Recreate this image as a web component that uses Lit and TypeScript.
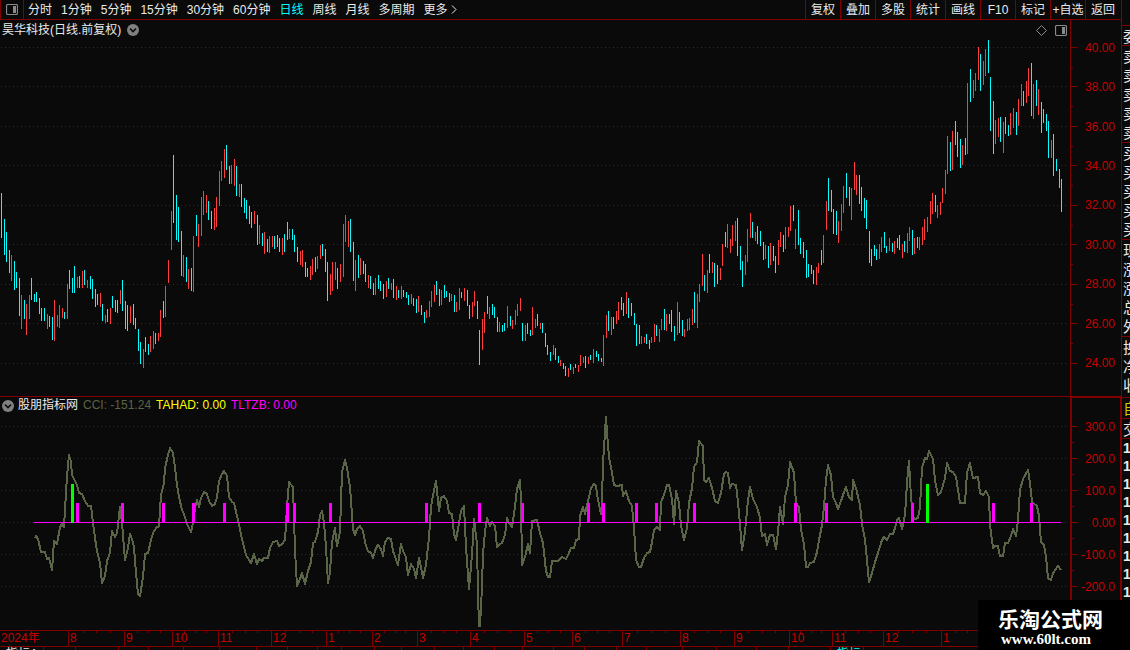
import { LitElement, html, svg, css } from "lit";
import { customElement, property } from "lit/decorators.js";
import { classMap } from "lit/directives/class-map.js";
import { styleMap } from "lit/directives/style-map.js";

/* One entry per trading day: r = up, c = down, then top and bottom of the bar. */
const DAYS = `
c193-238 c219-255 c232-262 c250-273 r255-281 c261-290 c272-288 c278-316 r295-329 c300-319 r304-335 r295-319 c278-300
c294-302 c292-302 c298-314 c308-321 c308-321 r314-329 c316-327 c317-340 r300-341 r315-327 r305-328 r308-318 c312-319
r284-319 c270-289 c278-293 c266-293 r277-288 c276-288 r271-288 c270-285 r280-288 c276-289 c279-299 c289-307 c294-305
r293-307 c304-321 r315-323 c309-322 r308-324 c296-308 c300-312 c300-313 r290-304 c280-311 c301-329 c305-331 r306-323
c304-325 c318-329 c329-351 c342-364 r349-368 c337-352 c344-355 r336-352 r331-349 c333-344 r333-341 r310-337 c301-318
r286-317 r260-283 r211-250 c155-223 c195-240 c207-242 c231-276 r255-277 c257-282 r269-289 c268-291 r236-292 c215-236
r224-247 r197-236 r191-215 r195-213 c201-220 c211-229 r208-230 r197-227 r171-206 r161-181 r149-178 c145-170 c166-184
r165-184 r159-186 c166-196 r184-197 c184-207 c198-213 c200-219 c206-224 c212-228 r211-224 c215-245 r225-244 c233-246
r232-254 c239-252 r236-253 r236-247 c236-249 c235-247 c238-252 r238-255 c234-252 c222-240 r229-239 c229-240 c235-252
c247-262 r251-265 r250-267 c262-277 c268-277 r266-280 r259-275 c257-272 r256-269 r245-259 c244-256 c249-272 c262-301
r274-295 r262-291 r262-280 c268-289 r264-282 r224-277 r215-242 r221-247 c219-252 c242-281 r260-291 c255-278 r258-275
c261-274 c264-282 r275-288 c276-289 c283-295 r278-295 c275-289 c281-291 c284-299 r281-297 c278-289 r283-290 c279-298
r286-300 c290-298 r286-299 c290-297 c292-298 c295-305 r294-304 c298-306 c299-313 r296-312 c305-315 c312-323 r310-318
r301-317 r291-307 r285-302 c281-295 c289-306 r290-305 c285-298 c291-297 c293-302 r294-301 c295-312 r302-312 r288-310
c292-298 r288-301 c290-306 c305-319 r302-317 r291-306 c301-319 c330-365 r319-350 r312-333 c296-314 r307-319 c304-315
c307-318 c317-332 r322-332 c325-332 c323-331 r306-328 c316-326 r320-329 r310-325 r304-316 r298-311 c323-341 r325-341
c323-334 c330-336 r307-335 r319-328 c314-326 r323-329 c323-333 c333-347 c345-355 c352-361 r345-355 c348-360 c356-363
r360-366 c363-369 c366-376 r368-377 c364-370 r367-374 c364-368 r365-372 r355-366 r357-363 c356-368 r357-364 c355-360
r349-363 c351-357 c354-361 c358-362 r335-366 r315-338 c311-331 r317-335 c317-329 r311-324 r302-320 c297-310 c303-316
r292-314 c298-318 c303-316 c313-325 c324-346 c325-344 r336-344 r337-343 c334-344 c340-349 r337-343 r324-342 c325-336
r329-342 r319-330 c309-330 r314-331 c314-324 c310-332 c326-341 r302-335 c312-333 c320-336 r329-337 r319-331 r318-330
r309-325 c292-323 r294-328 r284-302 r254-286 c275-291 r270-293 c254-273 r262-273 c263-287 c265-284 r268-280 r244-266
c232-247 r224-248 r239-253 r225-246 r221-241 c218-256 c246-270 c261-287 r255-275 r229-262 r213-238 c222-238 r232-241
c226-244 c231-246 c242-260 r245-259 c246-268 r243-265 c246-261 c256-273 r240-265 r232-247 c235-252 r227-249 r227-237
r206-231 c205-221 r229-249 c210-245 c238-254 c242-258 c250-278 c264-277 c265-274 c270-284 r267-285 r263-273 c250-265
r235-263 r201-230 c178-211 c190-212 c209-234 c211-235 r221-243 r204-231 r186-213 c173-198 c187-206 r188-220 r162-190
r175-195 c175-204 c187-211 c198-218 c200-229 c231-263 c249-266 c245-256 c249-260 r244-259 r237-252 c232-248 c246-253
r238-251 c243-252 r241-254 c238-248 c235-250 r244-258 c241-252 r233-253 r227-241 c230-255 r238-254 c237-248 r237-250
r227-245 r219-240 r217-232 r201-224 r193-214 c195-212 r205-218 r202-215 r188-203 r170-194 r136-174 c142-171 r131-170
c121-145 c132-157 c139-168 r145-165 c138-155 r83-154 c69-102 r80-98 r73-91 r47-80 c54-91 r61-85 r49-76 c40-73
c77-131 c101-154 r120-144 r118-137 c117-142 r122-153 c117-134 c125-136 r113-135 r108-128 c112-135 r99-126 r84-106
c91-106 r81-103 r68-96 c63-116 r84-119 c80-106 r89-115 c102-133 c109-123 c114-131 c121-158 r140-158 c134-176 c159-171
c169-188 c179-212`
  .trim()
  .split(/\s+/)
  .map((s, i) => {
    const [top, bottom] = s.slice(1).split("-").map(Number);
    return { up: s[0] === "r", x: Math.floor(1.5 + i * 2.53), top, bottom };
  });

const CCI = `35,538 36,536 38,539 41,552 45,552 47,559 49,558 52,570 54,541 57,544 60,527 62,524 64,527 67,476 69,455 71,462
72,475 77,485 79,493 82,494 85,501 88,506 91,506 93,523 96,545 98,555 100,563 102,583 105,576 107,561 110,553 112,531
115,537 117,533 120,507 122,523 125,560 128,548 130,534 132,539 134,547 136,573 138,594 140,596 143,577 145,554 148,553
151,540 153,533 156,528 159,526 161,495 164,483 165,468 168,455 170,448 173,453 175,467 177,485 179,497 182,510 184,514
187,524 191,532 193,523 195,508 197,500 199,507 201,498 204,492 207,494 209,501 212,506 215,504 217,497 219,481 222,474
224,471 227,476 229,497 232,502 234,503 237,516 239,525 242,539 246,555 249,560 251,563 254,554 257,564 259,559 262,561
264,558 268,558 270,548 273,542 277,541 279,546 282,544 285,540 287,507 289,482 293,487 295,550 297,586 300,579 302,573
305,584 308,571 311,562 313,543 315,542 318,532 320,515 322,511 324,523 326,547 328,583 330,572 332,542 335,528 337,546
340,532 342,472 345,460 347,468 350,487 353,529 355,535 357,529 360,526 363,531 366,546 368,551 371,553 373,558 376,548
378,545 381,549 383,556 385,542 388,538 391,539 393,551 398,565 401,544 403,551 406,557 408,575 411,564 414,569 416,578
419,558 421,567 423,578 426,565 429,538 431,507 433,495 436,481 439,511 441,498 444,496 447,501 449,513 452,514 454,534
456,540 459,523 461,511 464,506 466,547 469,589 472,555 474,519 477,544 478,593 479,626 480,626 482,587 483,553 485,532
487,518 490,526 492,522 495,526 497,547 500,544 502,543 505,535 507,518 509,523 512,527 515,507 517,489 520,480 521,500
522,565 525,557 528,544 530,553 532,521 537,520 540,533 543,543 546,571 548,577 550,577 552,561 558,561 562,557 566,559
568,555 571,548 574,548 576,540 579,539 580,516 583,507 585,514 589,497 591,488 594,484 596,486 598,500 601,514 602,500
603,463 606,417 607,433 609,457 612,473 614,485 617,486 622,485 623,496 626,491 629,501 632,506 634,528 636,560 639,567
641,567 644,558 647,553 650,552 652,542 654,530 657,527 660,530 661,502 664,495 667,485 669,485 672,499 674,524 676,491
679,503 681,525 684,540 687,528 689,503 692,488 694,467 697,462 699,441 703,446 704,480 706,482 709,478 712,488 715,501
718,503 721,493 724,474 726,472 728,473 730,488 732,484 736,485 738,502 740,525 742,550 745,532 748,500 750,487 753,499
757,507 760,518 762,536 765,534 767,545 770,535 773,535 776,549 778,532 780,507 783,524 785,497 788,485 790,462 792,467
794,473 796,503 799,507 801,530 804,544 806,567 808,567 810,563 814,562 817,552 819,540 822,525 824,507 826,480 828,465
831,475 833,497 836,503 838,509 841,501 844,492 846,487 849,497 852,500 853,480 856,488 860,505 862,524 865,540 867,560
869,582 872,573 875,562 878,553 882,540 884,537 887,540 890,534 893,534 895,528 897,520 899,518 902,529 905,515 907,483
909,461 911,497 913,517 915,519 918,518 920,507 922,468 925,458 927,459 929,451 933,459 935,480 938,495 941,492 945,478
947,463 950,471 953,472 956,477 958,490 960,503 965,503 967,473 970,463 973,478 978,477 980,493 983,495 986,491 989,497
990,525 993,548 995,546 998,546 1000,556 1003,556 1005,543 1008,543 1011,536 1013,529 1016,536 1018,520 1020,490 1023,479
1028,470 1030,483 1032,502 1037,506 1039,516 1041,542 1044,545 1046,557 1048,578 1051,580 1053,573 1058,566 1061,570`
  .trim()
  .split(/\s+/)
  .join(" ");

const SIGNALS = [76, 121, 162, 192, 223, 286, 293, 329, 425, 478, 521, 587, 602, 635, 655, 693, 794, 825, 911, 992, 1030];
const BUYS = [71, 926];

const PRICE_LINES = [47, 86, 126, 165, 205, 244, 284, 323, 363];
const CCI_LINES = [426, 458, 490, 522, 554, 586];

const PERIODS = ["分时", "1分钟", "5分钟", "15分钟", "30分钟", "60分钟", "日线", "周线", "月线", "多周期", "更多"];
const TOOLS = ["复权", "叠加", "多股", "统计", "画线", "F10", "标记", "+自选", "返回"];

const MONTHS: [string, number][] = [
  ["2024年", 68], ["8", 56], ["9", 48], ["10", 46], ["11", 53], ["12", 55], ["1", 46], ["2", 45], ["3", 53],
  ["4", 54], ["5", 48], ["6", 50], ["7", 58], ["8", 54], ["9", 55], ["10", 43], ["11", 51], ["12", 58], ["1", 52], ["", 128],
];

const TABS: [string, number][] = [
  ["指标A", 43], ["", 31], ["", 42], ["", 29], ["", 34], ["", 35], ["", 36], ["", 30], ["", 29], ["", 24], ["", 32],
  ["", 26], ["", 32], ["", 28], ["", 30], ["", 28], ["", 30], ["", 30], ["", 31], ["", 29], ["", 35], ["", 33],
  ["", 39], ["", 31], ["", 41], ["指标", 32], ["", 250],
];

const share = (w: number, list: [string, number][]) => ({
  flexBasis: `${(w / list.reduce((sum, [, n]) => sum + n, 0)) * 100}%`,
});

const tickPath = (lines: number[], origin: number) =>
  lines
    .map((y, i) => {
      const next = lines[i + 1] ?? y + (lines[1] - lines[0]);
      const minor = Math.round((y + next) / 2);
      const last = i === lines.length - 1;
      return `M0 ${y - origin + 0.5}H6${last ? "" : `M0 ${minor - origin + 0.5}H2`}`;
    })
    .join("");

const gridPath = (lines: number[], origin: number) => lines.map((y) => `M1 ${y - origin + 0.5}H1066`).join("");

const chevron = html`<svg class="drop" viewBox="0 0 12 12" aria-hidden="true">
  <circle cx="6" cy="6" r="6" fill="#808080" />
  <path d="M3 4.5L6 7.5L9 4.5" fill="none" stroke="#0a0a0a" stroke-width="1.6" />
</svg>`;

const splitIcon = html`<svg class="split" viewBox="0 0 12 11" aria-hidden="true">
  <rect x=".5" y=".5" width="11" height="10" rx="1.5" fill="none" stroke="#8a8a8a" stroke-width="1.2" />
  <rect x="7" y="2" width="3" height="7" fill="#8a8a8a" />
</svg>`;

@customElement("period-bar")
class PeriodBar extends LitElement {
  @property() active = "日线";

  static styles = css`
    :host { display: flex; align-items: stretch; height: 19px; border-bottom: 1px solid #800000; }
    button { all: unset; font: 12px/20px "Liberation Sans", "Noto Sans CJK SC", sans-serif; color: #eaeaea; white-space: nowrap; cursor: pointer; }
    .layout { border-left: 1px solid #800000; border-right: 1px solid #800000; display: flex; align-items: center; justify-content: center; box-sizing: border-box; flex: 0 0 24px; }
    .split { width: 12px; height: 11px; display: block; }
    .periods { display: flex; gap: 9px; padding-left: 4px; flex: 1; height: 19px; }
    .periods .active { color: #00ffff; }
    .more { display: flex; align-items: center; gap: 3px; }
    .arrow { width: 6px; height: 9px; }
    .tools { display: flex; padding-right: 1px; }
    .tools button { width: 34px; border-left: 1px solid #800000; text-align: center; height: 19px; }
  `;

  render() {
    return html`
      <button class="layout" aria-label="布局">${splitIcon}</button>
      <nav class="periods">
        ${PERIODS.map(
          (p) => html`<button class=${classMap({ active: p === this.active, more: p === "更多" })} @click=${() => (this.active = p)}>
            ${p}${p === "更多"
              ? html`<svg class="arrow" viewBox="0 0 6 9" aria-hidden="true"><path d="M1 .5L5 4.5L1 8.5" fill="none" stroke="#eaeaea" /></svg>`
              : ""}</button>`
        )}
      </nav>
      <div class="tools">${TOOLS.map((t) => html`<button>${t}</button>`)}</div>
    `;
  }
}

const panelStyles = css`
  :host { display: grid; grid-template-columns: minmax(0, 1fr) 51px; min-height: 0; font: 12px/20px "Liberation Sans", "Noto Sans CJK SC", sans-serif; color: #eaeaea; }
  .plot { display: grid; min-height: 0; min-width: 0; }
  .chart, .head { grid-area: 1 / 1; }
  .chart { width: 100%; height: 100%; min-height: 0; display: block; shape-rendering: crispEdges; }
  .head { display: flex; align-self: start; align-items: center; gap: 6px; white-space: nowrap; }
  .head button { all: unset; display: flex; cursor: pointer; }
  .drop { width: 12px; height: 12px; display: block; }
  .axis { display: flex; min-height: 0; border-left: 1px solid #800000; box-sizing: border-box; }
  .ticks { width: 6px; height: 100%; shape-rendering: crispEdges; }
  .labels { list-style: none; margin: 0; flex: 1; display: flex; flex-direction: column; box-sizing: border-box; color: #c80000; text-align: right; }
  .labels li { flex: 1; display: flex; align-items: center; justify-content: flex-end; }
`;

@customElement("price-panel")
class PricePanel extends LitElement {
  static styles = [
    panelStyles,
    css`
      .head { padding: 0 3px 0 2px; }
      .spacer { flex: 1; }
      .diamond { width: 11px; height: 11px; }
      .split { width: 12px; height: 11px; display: block; }
      .head .pane { padding-left: 2px; }
      .labels { padding: 8px 6px 13px 0; }
    `,
  ];

  render() {
    const path = (up: boolean) =>
      DAYS.filter((d) => d.up === up)
        .map((d) => `M${d.x + 0.5} ${d.top - 20}V${d.bottom - 20}`)
        .join("");
    return html`
      <div class="plot">
        <svg class="chart" viewBox="0 0 1070 376" preserveAspectRatio="none" role="img" aria-label="日线">
          <path d=${gridPath(PRICE_LINES, 20)} stroke="#780a0a" stroke-dasharray="1 3" />
          <path d=${path(true)} stroke="#ff3c3c" />
          <path d=${path(false)} stroke="#00ffff" />
        </svg>
        <header class="head">
          <span>昊华科技(日线.前复权)</span>
          <button aria-label="选项">${chevron}</button>
          <span class="spacer"></span>
          <button aria-label="标注">
            <svg class="diamond" viewBox="0 0 11 11"><path d="M5.5 .5L10.5 5.5L5.5 10.5L.5 5.5Z" fill="none" stroke="#8a8a8a" /></svg>
          </button>
          <button class="pane" aria-label="侧栏">${splitIcon}</button>
        </header>
      </div>
      <div class="axis">
        <svg class="ticks" viewBox="0 0 6 376" preserveAspectRatio="none"><path d=${tickPath(PRICE_LINES, 20)} stroke="#800000" /></svg>
        <ul class="labels">
          ${PRICE_LINES.map((_, i) => html`<li>${(40 - i * 2).toFixed(2)}</li>`)}
        </ul>
      </div>
    `;
  }
}

@customElement("cci-panel")
class CciPanel extends LitElement {
  static styles = [
    panelStyles,
    css`
      .plot { border-top: 1px solid #800000; }
      .head { padding-left: 2px; line-height: 17px; gap: 5px; }
      .head .name { margin-left: -1px; }
      .cci { color: #5a6446; }
      .tahad { color: #ffff00; }
      .tltzb { color: #ff00ff; }
      .axis { border: solid #800000; border-width: 2px 1px 0 2px; }
      .labels { padding: 13px 5px 27px 0; }
    `,
  ];

  render() {
    return html`
      <div class="plot">
        <svg class="chart" viewBox="0 397 1070 233" preserveAspectRatio="none" role="img" aria-label="CCI">
          <path d=${gridPath(CCI_LINES, 0)} stroke="#780a0a" stroke-dasharray="1 3" />
          <polyline points=${CCI} fill="none" stroke="#5a6446" stroke-width="2" stroke-linejoin="round" />
          ${SIGNALS.map((x) => svg`<rect x=${x} y="503" width="3" height="20" fill="#ff00ff" />`)}
          <path d="M34 522.5H1061" stroke="#ff00ff" />
          ${BUYS.map((x) => svg`<rect x=${x} y="484" width="3" height="39" fill="#00ff00" />`)}
        </svg>
        <header class="head">
          <button aria-label="选项">${chevron}</button>
          <span class="name">股朋指标网</span>
          <span class="cci">CCI: -151.24</span>
          <span class="tahad">TAHAD: 0.00</span>
          <span class="tltzb">TLTZB: 0.00</span>
        </header>
      </div>
      <div class="axis">
        <svg class="ticks" viewBox="0 398 6 232" preserveAspectRatio="none"><path d=${tickPath(CCI_LINES, 0)} stroke="#800000" /></svg>
        <ul class="labels">
          ${[300, 200, 100, 0, -100, -200].map((v) => html`<li>${v === 0 ? "0.00" : v.toFixed(1)}</li>`)}
        </ul>
      </div>
    `;
  }
}

@customElement("quote-strip")
class QuoteStrip extends LitElement {
  static styles = css`
    :host { display: block; overflow: hidden; border-left: 1px solid #800000; padding-top: 25px; box-sizing: border-box; font: 15px/19px "Noto Sans CJK SC", sans-serif; color: #eaeaea; }
    .group { border-top: 1px solid #800000; padding: 0 0 1px 1px; }
    .row { display: block; height: 19px; white-space: nowrap; }
    .single { padding-bottom: 0; }
    .wide { padding-bottom: 3px; }
    .tab { color: #c8c800; }
    .ticks { font: bold 14px/18px "Liberation Sans", sans-serif; }
    .ticks .row { height: 18px; }
  `;

  private group(rows: string[], kind = "") {
    return html`<div class="group ${kind}">${rows.map((r) => html`<span class="row">${r}</span>`)}</div>`;
  }

  render() {
    return html`
      ${this.group(["委"], "single")} ${this.group(["卖", "卖", "卖", "卖", "卖"])} ${this.group(["买", "买", "买", "买", "买"])}
      ${this.group(["现", "涨", "涨", "总", "外"])} ${this.group(["换", "净", "收"], "wide")} ${this.group(["自"], "tab")}
      ${this.group(["交"], "single")} ${this.group(Array(9).fill("1"), "ticks")}
    `;
  }
}

@customElement("app-root")
class AppRoot extends LitElement {
  static styles = css`
    :host { display: grid; grid-template-columns: minmax(0, 1fr) 9px; height: 100vh; overflow: hidden; position: relative; background: #0a0a0a; font: 12px/15px "Liberation Sans", "Noto Sans CJK SC", sans-serif; }
    .main { display: grid; grid-template-rows: 20px minmax(0, 376fr) minmax(0, 234fr) 16px 4px; min-width: 0; height: 100vh; }
    .months { display: flex; border-top: 1px solid #800000; color: #c80000; }
    .month {
      flex: 0 0 auto; min-width: 0; box-sizing: border-box; border-left: 1px solid #800000; padding-left: 1px; white-space: nowrap;
      background: linear-gradient(#800000, #800000) 25% 0 / 1px 2px no-repeat, linear-gradient(#800000, #800000) 50% 0 / 1px 2px no-repeat,
        linear-gradient(#800000, #800000) 75% 0 / 1px 2px no-repeat;
    }
    .year { border-left: 0; background: none; }
    .tabs { display: flex; border-top: 1px solid #800000; overflow: hidden; }
    .tab { flex: 0 0 auto; min-width: 0; box-sizing: border-box; border-right: 1px solid #800000; line-height: 14px; color: #eaeaea; padding-left: 6px; white-space: nowrap; }
    .current { color: #00ffff; }
    .strip { height: 100vh; }
    .brand { position: absolute; right: 0; bottom: 0; width: 152px; height: 50px; box-sizing: border-box; padding: 6px 0 0 20px; background: #000; color: #fff; display: flex; flex-direction: column; }
    .brand-name { font: bold 21px/24px "Noto Sans CJK SC", sans-serif; }
    .brand-url { font: bold 15px/19px "Liberation Serif", serif; padding-left: 3px; color: inherit; text-decoration: none; }
  `;

  render() {
    return html`
      <main class="main">
        <period-bar></period-bar>
        <price-panel></price-panel>
        <cci-panel></cci-panel>
        <div class="months">
          ${MONTHS.map(([m, w], i) => html`<span class=${classMap({ month: true, year: i === 0 })} style=${styleMap(share(w, MONTHS))}>${m}</span>`)}
        </div>
        <div class="tabs">
          ${TABS.map(([t, w]) => html`<span class=${classMap({ tab: true, current: t === "指标" })} style=${styleMap(share(w, TABS))}>${t}</span>`)}
        </div>
      </main>
      <quote-strip class="strip"></quote-strip>
      <aside class="brand">
        <span class="brand-name">乐淘公式网</span>
        <a class="brand-url" href="#">www.60lt.com</a>
      </aside>
    `;
  }
}
